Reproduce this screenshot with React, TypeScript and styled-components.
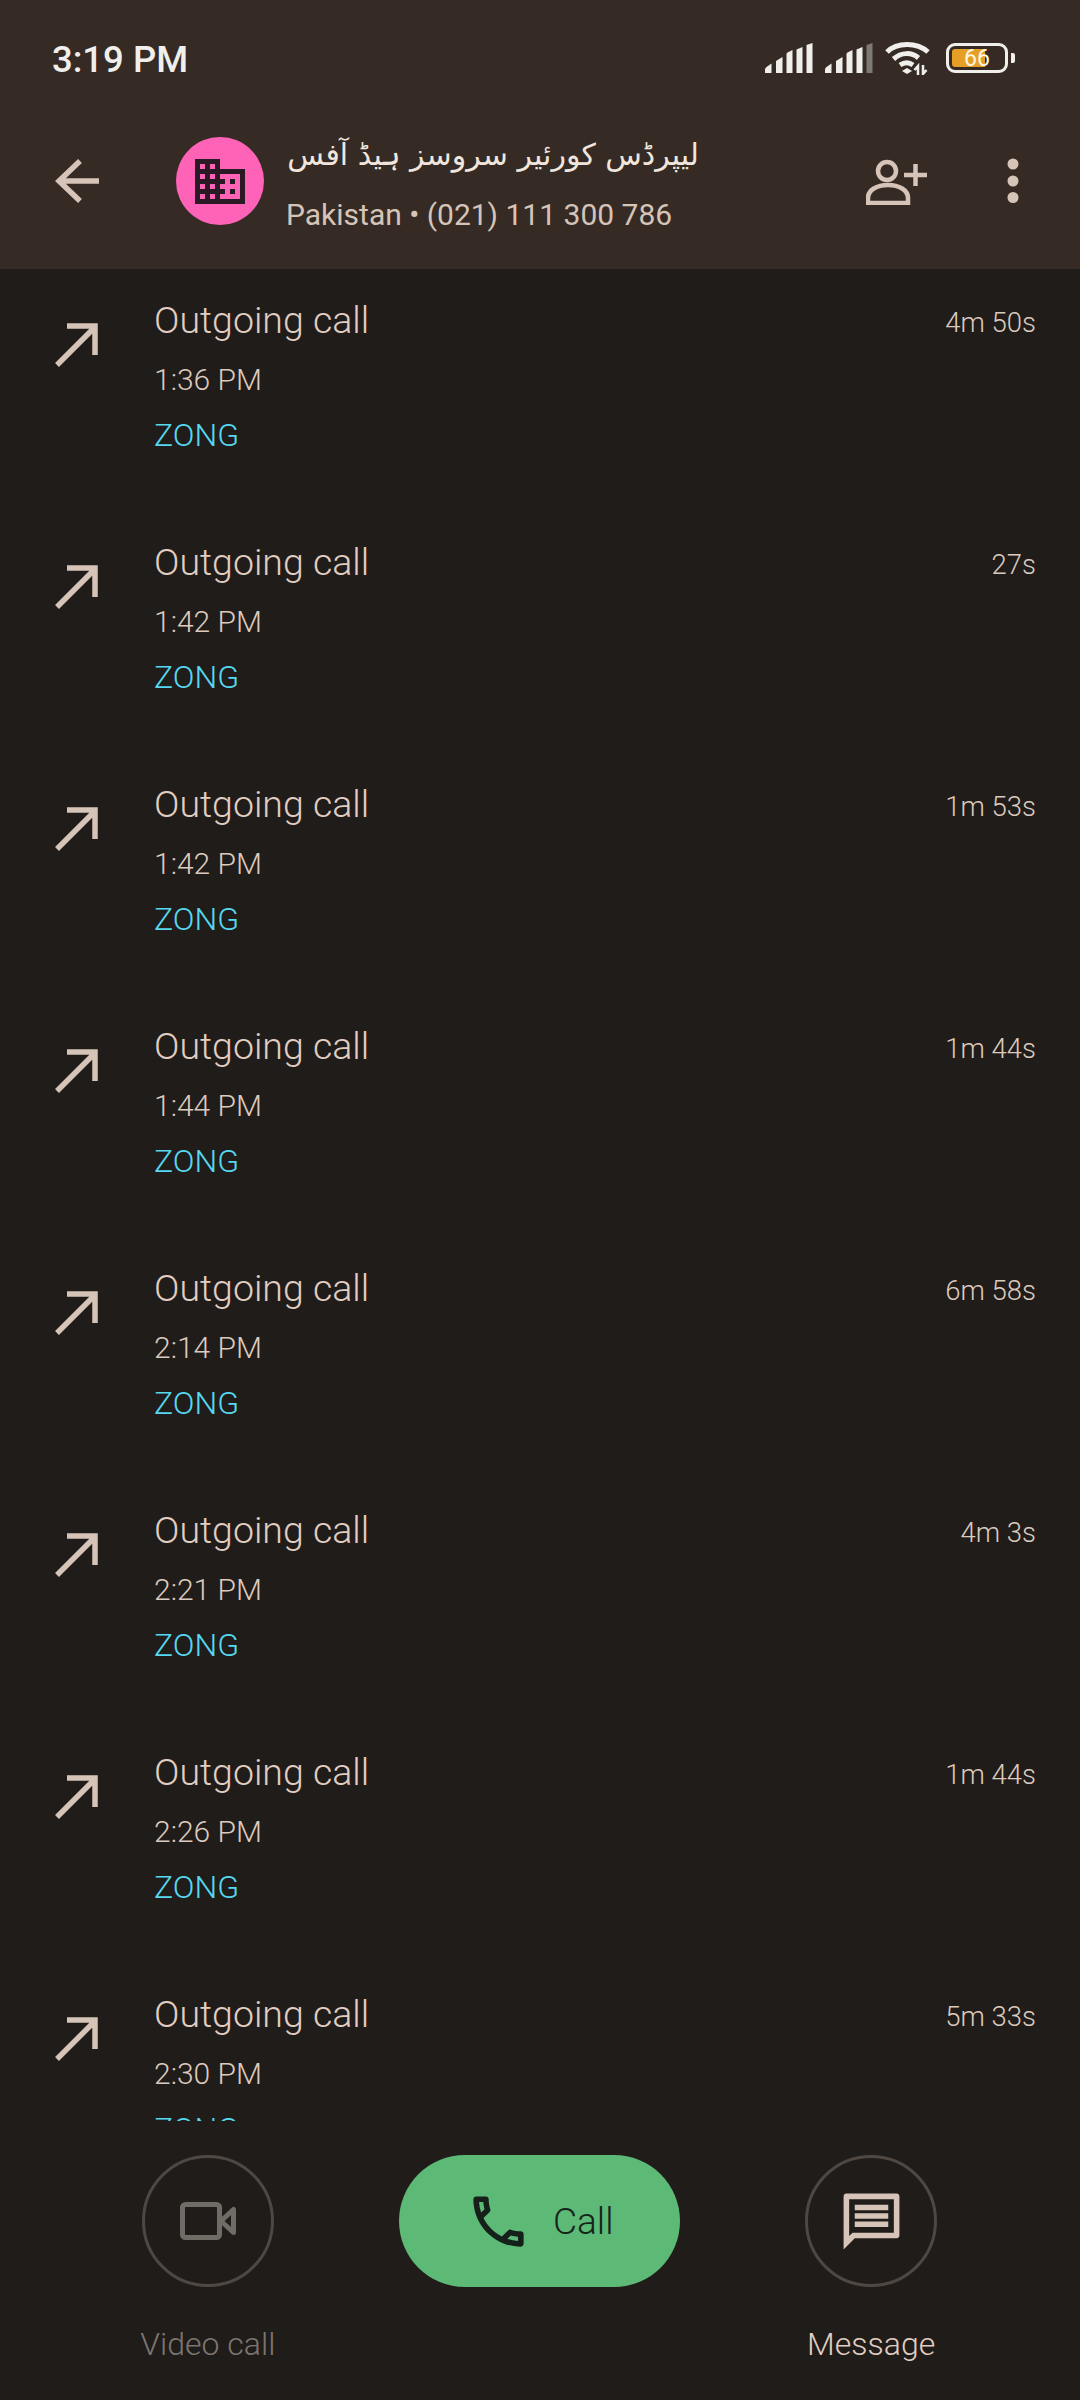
import React from "react";
import styled, { createGlobalStyle } from "styled-components";

const Global = createGlobalStyle`
  html, body { margin: 0; padding: 0; background: #201c19; }
  * { box-sizing: border-box; }
`;

const Page = styled.div`
  width: 1080px;
  height: 2400px;
  display: flex;
  flex-direction: column;
  background: #201c19;
  font-family: Roboto, "Noto Sans", sans-serif;
  font-weight: 300;
  overflow: hidden;
`;

const Header = styled.header`
  height: 269px;
  flex: none;
  background: #352b24;
`;

const StatusBar = styled.div`
  height: 116px;
  display: flex;
  align-items: center;
  justify-content: space-between;
  padding: 0 65px 0 52px;
`;

const Clock = styled.span`
  color: #f1efec;
  font-size: 36.5px;
  font-weight: 500;
  position: relative;
  top: 1px;
`;

const StatusIcons = styled.div`
  display: flex;
  align-items: center;
  gap: 12px;
`;

const BatteryWrap = styled.div`
  display: flex;
  align-items: center;
  gap: 3px;
  margin-left: 3px;
`;

const BatteryBody = styled.div`
  position: relative;
  width: 62px;
  height: 30px;
  border: 3px solid #f1efec;
  border-radius: 9px;
  display: flex;
  align-items: center;
  justify-content: center;
  overflow: hidden;
`;

const BatteryFill = styled.div`
  position: absolute;
  left: 3px;
  top: 3px;
  bottom: 3px;
  width: 33px;
  border-radius: 3px 0 0 3px;
  background: #e59f26;
`;

const BatteryText = styled.span`
  position: relative;
  color: #fff6e0;
  font-size: 23px;
  font-weight: 400;
  line-height: 1;
`;

const BatteryNub = styled.div`
  width: 4px;
  height: 10px;
  border-radius: 0 2px 2px 0;
  background: #f1efec;
`;

const AppBar = styled.div`
  height: 153px;
  display: flex;
  align-items: flex-start;
  padding-right: 61px;
`;

const BackButton = styled.div`
  width: 176px;
  padding: 43px 0 0 55px;
  flex: none;
  display: flex;
`;

const Avatar = styled.div`
  width: 88px;
  height: 88px;
  margin-top: 21px;
  border-radius: 50%;
  background: #ff63b8;
  display: flex;
  align-items: center;
  justify-content: center;
  flex: none;
`;

const Identity = styled.div`
  margin-left: 22px;
  flex: 1;
  min-width: 0;
  display: flex;
  flex-direction: column;
`;

const Name = styled.div`
  direction: rtl;
  text-align: right;
  width: 413px;
  height: 50px;
  margin-top: 14px;
  color: #f1e6de;
  font-family: "DejaVu Sans", "Noto Sans", sans-serif;
  font-weight: 400;
  font-size: 30px;
  line-height: 50px;
  white-space: nowrap;
`;

const Sub = styled.div`
  margin-top: 15px;
  color: #d6c4b8;
  font-size: 30px;
  font-weight: 400;
  line-height: 40px;
  white-space: nowrap;
`;

const AddContact = styled.div`
  flex: none;
  margin-top: 43px;
  display: flex;
`;

const More = styled.div`
  flex: none;
  margin: 42px 0 0 79px;
  display: flex;
`;

const List = styled.div`
  flex: 1;
  min-height: 0;
  overflow: hidden;
  padding-top: 27px;
`;

const Row = styled.div`
  height: 242px;
  display: flex;
  align-items: flex-start;
  padding: 0 44px 0 55px;
`;

const RowIcon = styled.div`
  width: 99px;
  flex: none;
  padding-top: 27px;
  display: flex;
`;

const RowBody = styled.div`
  flex: 1;
  display: flex;
  flex-direction: column;
`;

const Title = styled.div`
  color: #e0cec2;
  font-size: 37.5px;
  line-height: 48px;
`;

const Time = styled.div`
  margin-top: 14px;
  color: #dccabe;
  font-size: 30px;
  line-height: 44px;
`;

const Sim = styled.div`
  margin-top: 11px;
  color: #56d8f0;
  font-size: 32px;
  line-height: 44px;
`;

const Duration = styled.div`
  flex: none;
  padding-top: 7px;
  color: #dccabe;
  font-size: 27.5px;
  line-height: 40px;
`;

const Footer = styled.footer`
  height: 279px;
  flex: none;
  padding: 34px 43px 0 42px;
  display: grid;
  grid-template-columns: repeat(3, 1fr);
  align-items: start;
`;

const Action = styled.div`
  display: flex;
  flex-direction: column;
  align-items: center;
`;

const CircleButton = styled.div`
  width: 132px;
  height: 132px;
  border-radius: 50%;
  border: 3px solid #4f4741;
  display: flex;
  align-items: center;
  justify-content: center;
`;

const CallPill = styled.div`
  width: 281px;
  height: 132px;
  border-radius: 66px;
  background: #5cb976;
  color: #16241a;
  display: flex;
  align-items: center;
  padding-left: 66px;
  gap: 21px;
  font-size: 37px;
`;

const ActionLabel = styled.div<{ $muted?: boolean }>`
  margin-top: 37px;
  font-size: 32px;
  line-height: 40px;
  color: ${(p) => (p.$muted ? "#7c7671" : "#e0cec2")};
`;

const Bars = ({ last }: { last: string }) => (
  <svg width="48" height="30" viewBox="0 0 48 30">
    <path d="M0 30v-3.500q0-1.500 1.500-2.500l5-3.500V30z" fill="#f1efec" />
    <path d="M11 30V18l6.500-4V30z" fill="#f1efec" />
    <path d="M21.500 30V11q0-1 1-1.500l5-2.500V30z" fill="#f1efec" />
    <path d="M31.500 30V6.500l6-2.500V30z" fill="#f1efec" />
    <path d="M41.500 30V2l6-2V30z" fill={last} />
  </svg>
);

const Wifi = () => (
  <svg width="46" height="34" viewBox="0 0 46 34" fill="none" stroke="#f1efec" strokeWidth="5">
    <path d="M2 11C12 1 32 1 43 11" />
    <path d="M8.500 18c8-7 18-7 25-1" />
    <path d="M15 24c4.500-3 9-3 13 0" />
    <path d="M17 30l5-3 5 3-5 3z" fill="#f1efec" stroke="none" />
    <path d="M33 34V25l-3.500 4M38 24v9l3.500-4" strokeWidth="2.500" />
  </svg>
);

const ArrowBack = () => (
  <svg width="44" height="44" viewBox="0 0 44 44" fill="none" stroke="#d6c4b8" strokeWidth="5.500">
    <path d="M44 22H4M25 2L4 22l21 20" />
  </svg>
);

const Building = () => (
  <svg width="50" height="45" viewBox="0 0 50 45">
    <path
      fill="#2a1a24"
      fillRule="evenodd"
      d="M0 0h25v10h25v35H0zM5 5v5h5V5zM15 5v5h5V5zM5 15v5h5v-5zM15 15v5h5v-5zM5 25v5h5v-5zM15 25v5h5v-5zM5 35v5h5v-5zM15 35v5h5v-5zM25 15v5h5v5h-5v5h5v5h-5v5h20V15zM35 20h5v5h-5zM35 30h5v5h-5z"
    />
  </svg>
);

const PersonAdd = () => (
  <svg width="62" height="46" viewBox="0 0 62 46" fill="none" stroke="#d6c4b8" strokeWidth="4.500">
    <circle cx="21" cy="12" r="9" />
    <path d="M2 44v-5c0-8 9-13 20-13s20 5 20 13v5z" />
    <path d="M38 16h23M49.500 5v22" />
  </svg>
);

const MoreDots = () => (
  <svg width="12" height="46" viewBox="0 0 12 46" fill="#d6c4b8">
    <circle cx="6" cy="6" r="5.500" />
    <circle cx="6" cy="23" r="5.500" />
    <circle cx="6" cy="39.500" r="5.500" />
  </svg>
);

const CallMade = () => (
  <svg width="44" height="44" viewBox="0 0 44 44" fill="none" stroke="#d6c4b8" strokeWidth="5.500">
    <path d="M2 42L39 5M12 3h28v29" />
  </svg>
);

const PhoneIcon = () => (
  <svg width="67" height="67" viewBox="0 0 24 24" fill="#16201a">
    <path d="M6.540 5c.06.89.21 1.760.45 2.590l-1.200 1.200c-.41-1.200-.67-2.470-.76-3.790h1.510m9.860 12.020c.85.24 1.720.39 2.600.45v1.490c-1.320-.09-2.590-.35-3.800-.75l1.200-1.190M7.500 3H4c-.55 0-1 .45-1 1 0 9.390 7.610 17 17 17 .55 0 1-.45 1-1v-3.490c0-.55-.45-1-1-1-1.240 0-2.450-.2-3.570-.57-.1-.04-.21-.05-.31-.05-.26 0-.51.1-.71.29l-2.200 2.200c-2.830-1.450-5.150-3.760-6.590-6.590l2.200-2.200c.28-.28.36-.67.25-1.020C8.700 6.450 8.500 5.250 8.500 4c0-.55-.45-1-1-1z" />
  </svg>
);

const VideoIcon = () => (
  <svg width="56" height="38" viewBox="0 0 56 38" fill="none" stroke="#716b66" strokeWidth="5">
    <rect x="2.500" y="2.500" width="37" height="33" rx="3" />
    <path d="M41 19l12.500-11.500v23z" strokeLinejoin="round" />
  </svg>
);

const MessageIcon = () => (
  <svg width="67" height="67" viewBox="0 0 24 24" fill="#d6c4b8">
    <path
      fillRule="evenodd"
      d="M21 2H3c-.55 0-1 .45-1 1v19l4-4h15c.55 0 1-.45 1-1V3c0-.55-.45-1-1-1zM20 16H5.200L4 17.200V4h16zM6 6h12v2H6zM6 9h12v2H6zM6 12h12v2H6z"
    />
  </svg>
);

const calls = [
  ["1:36 PM", "4m 50s"],
  ["1:42 PM", "27s"],
  ["1:42 PM", "1m 53s"],
  ["1:44 PM", "1m 44s"],
  ["2:14 PM", "6m 58s"],
  ["2:21 PM", "4m 3s"],
  ["2:26 PM", "1m 44s"],
  ["2:30 PM", "5m 33s"],
];

export default function App() {
  return (
    <Page>
      <Global />
      <Header>
        <StatusBar>
          <Clock>3:19 PM</Clock>
          <StatusIcons>
            <Bars last="#f1efec" />
            <Bars last="#7f7974" />
            <Wifi />
            <BatteryWrap>
              <BatteryBody>
                <BatteryFill />
                <BatteryText>66</BatteryText>
              </BatteryBody>
              <BatteryNub />
            </BatteryWrap>
          </StatusIcons>
        </StatusBar>
        <AppBar>
          <BackButton>
            <ArrowBack />
          </BackButton>
          <Avatar>
            <Building />
          </Avatar>
          <Identity>
            <Name>لیپرڈس کورئیر سروسز ہیڈ آفس</Name>
            <Sub>Pakistan • (021) 111 300 786</Sub>
          </Identity>
          <AddContact>
            <PersonAdd />
          </AddContact>
          <More>
            <MoreDots />
          </More>
        </AppBar>
      </Header>
      <List>
        {calls.map(([time, duration], i) => (
          <Row key={i}>
            <RowIcon>
              <CallMade />
            </RowIcon>
            <RowBody>
              <Title>Outgoing call</Title>
              <Time>{time}</Time>
              <Sim>ZONG</Sim>
            </RowBody>
            <Duration>{duration}</Duration>
          </Row>
        ))}
      </List>
      <Footer>
        <Action>
          <CircleButton>
            <VideoIcon />
          </CircleButton>
          <ActionLabel $muted>Video call</ActionLabel>
        </Action>
        <Action>
          <CallPill>
            <PhoneIcon />
            Call
          </CallPill>
        </Action>
        <Action>
          <CircleButton>
            <MessageIcon />
          </CircleButton>
          <ActionLabel>Message</ActionLabel>
        </Action>
      </Footer>
    </Page>
  );
}
